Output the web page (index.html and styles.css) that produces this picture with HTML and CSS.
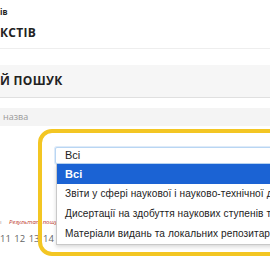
FILE: index.html
```html
<!DOCTYPE html>
<html lang="uk">
<head>
    <meta charset="UTF-8">
    <meta name="viewport" content="width=device-width, initial-scale=1.0">
    <title>Пошук</title>
    <link rel="stylesheet" href="styles.css">
</head>
<body>

    <div class="header">
        <p class="crumb">ів</p>
        <h2 class="title">КСТІВ</h2>
    </div>

    <div class="search-head">
        <h3>Й ПОШУК</h3>
    </div>

    <div class="field">назва</div>

    <div class="results">
        <p class="note"><span class="bar">ı</span> Результат пошуку</p>
        <p class="pager">11 12 13 14 15</p>
    </div>

    <!-- highlighted select with its open list -->
    <div class="highlight"></div>
    <div class="select">Всі</div>
    <ul class="options">
        <li class="active">Всі</li>
        <li>Звіти у сфері наукової і науково-технічної діяльності</li>
        <li>Дисертації на здобуття наукових ступенів та звань</li>
        <li>Матеріали видань та локальних репозитаріїв</li>
    </ul>

</body>
</html>
```

FILE: styles.css
```css
* {
    margin: 0;
    padding: 0;
    box-sizing: border-box;
}

body {
    width: 270px;
    height: 270px;
    overflow: hidden;
    background: #fff;
    font-family: "Open Sans", sans-serif;
    color: #222;
    position: relative;
}

/* Header */
.header {
    height: 49px;
    border-bottom: 1px solid #eee;
    padding-top: 7px;
}

.crumb {
    font-size: 8px;
    font-weight: bold;
    line-height: 10px;
}

.title {
    margin-top: 9px;
    font-size: 12px;
    font-weight: bold;
    line-height: 14px;
    letter-spacing: 0.3px;
}

/* Search head */
.search-head {
    margin-top: 16px;
    height: 33px;
    background: #f6f6f6;
    border-bottom: 1px solid #e0e0e0;
    display: flex;
    align-items: center;
}

.search-head h3 {
    font-size: 12px;
    font-weight: bold;
    letter-spacing: 0.3px;
    padding-bottom: 2px;
}

.field {
    margin-top: 10px;
    height: 18px;
    background: #f4f4f4;
    padding-left: 3px;
    font-size: 9px;
    line-height: 18px;
    color: #999;
}

/* Results behind the overlay */
.results {
    margin-top: 91px;
    display: flex;
    flex-direction: column;
    gap: 6px;
}

.note {
    height: 10px;
    font-size: 6px;
    line-height: 10px;
    font-style: italic;
    color: #c0392b;
    white-space: nowrap;
}

.note .bar {
    color: #999;
    font-style: normal;
    margin-right: 6px;
}

.pager {
    height: 12px;
    font-size: 9.5px;
    line-height: 12px;
    color: #666;
    word-spacing: 1px;
    white-space: nowrap;
}

/* Yellow highlight ring */
.highlight {
    position: absolute;
    left: 38px;
    top: 129px;
    width: 260px;
    height: 127px;
    border: 4px solid #f3c623;
    border-radius: 14px;
}

/* Select */
.select {
    position: absolute;
    left: 55px;
    top: 147px;
    width: 240px;
    height: 17px;
    border: 1px solid #b9d6f3;
    box-shadow: 0 0 0 1px #deebf9;
    border-radius: 2px;
    background: #fff;
    padding-left: 9px;
    font-family: "Liberation Sans", sans-serif;
    font-size: 11px;
    line-height: 15px;
    color: #222;
}

.options {
    position: absolute;
    left: 56px;
    top: 164px;
    width: 240px;
    list-style: none;
    background: #fff;
    border: 1px solid #c9c9c9;
    border-top: none;
    box-shadow: 0 2px 4px rgba(0, 0, 0, 0.15);
    font-family: "Liberation Sans", sans-serif;
    font-size: 10.1px;
    letter-spacing: 0.1px;
    color: #222;
}

.options li {
    height: 20px;
    line-height: 20px;
    padding-left: 8px;
    white-space: nowrap;
}

.options li.active {
    background: #1b63d4;
    color: #fff;
    font-weight: bold;
    font-size: 11px;
}
```
